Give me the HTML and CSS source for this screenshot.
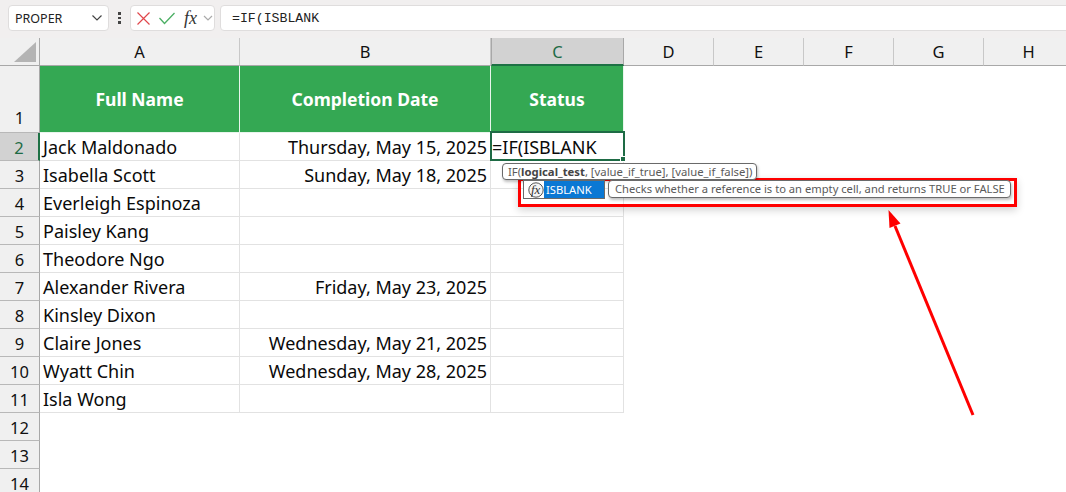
FILE: index.html
```html
<!DOCTYPE html>
<html lang="en">
<head>
<meta charset="utf-8">
<title>Excel ISBLANK</title>
<link rel="stylesheet" href="styles.css">
</head>
<body>
<div class="toolbar">
  <div class="box namebox"><span>PROPER</span>
    <svg class="chev" width="12" height="8" viewBox="0 0 12 8"><path d="M1.5 1.5 6 6l4.500-4.500" fill="none" stroke="#444" stroke-width="1.2"/></svg>
  </div>
  <div class="dots"><i></i><i></i><i></i></div>
  <div class="box fnbox">
    <svg width="13" height="13" viewBox="0 0 13 13"><path d="M.5.500l12 12M12.500.500l-12 12" stroke="#e0474c" stroke-width="1.200" fill="none"/></svg>
    <svg width="16" height="13" viewBox="0 0 16 13"><path d="M.5 6l5 5.500L15.500 1" stroke="#4caf64" stroke-width="1.300" fill="none"/></svg>
    <span class="fx">fx</span>
    <svg width="10" height="7" viewBox="0 0 10 7"><path d="M1 1l4 4 4-4" fill="none" stroke="#aaa" stroke-width="1.200"/></svg>
  </div>
  <div class="box formula">=IF(ISBLANK</div>
</div>
<div class="sheet">
  <div class="ch corner"><svg width="24" height="22" viewBox="0 0 24 22"><path d="M23 1v20H1z" fill="#b4b4b4"/></svg></div>
  <div class="ch">A</div><div class="ch">B</div><div class="ch sel">C</div><div class="ch">D</div><div class="ch">E</div><div class="ch">F</div><div class="ch">G</div><div class="ch">H</div>

  <div class="rh r1">1</div><div class="th">Full Name</div><div class="th">Completion Date</div><div class="th">Status</div><div class="blank span5"></div>

  <div class="rh selrow">2</div><div class="c">Jack Maldonado</div><div class="c num">Thursday, May 15, 2025</div><div class="c editing">=IF(ISBLANK</div><div class="blank span5"></div>
  <div class="rh">3</div><div class="c">Isabella Scott</div><div class="c num">Sunday, May 18, 2025</div><div class="c"></div><div class="blank span5"></div>
  <div class="rh">4</div><div class="c">Everleigh Espinoza</div><div class="c"></div><div class="c"></div><div class="blank span5"></div>
  <div class="rh">5</div><div class="c">Paisley Kang</div><div class="c"></div><div class="c"></div><div class="blank span5"></div>
  <div class="rh">6</div><div class="c">Theodore Ngo</div><div class="c"></div><div class="c"></div><div class="blank span5"></div>
  <div class="rh">7</div><div class="c">Alexander Rivera</div><div class="c num">Friday, May 23, 2025</div><div class="c"></div><div class="blank span5"></div>
  <div class="rh">8</div><div class="c">Kinsley Dixon</div><div class="c"></div><div class="c"></div><div class="blank span5"></div>
  <div class="rh">9</div><div class="c">Claire Jones</div><div class="c num">Wednesday, May 21, 2025</div><div class="c"></div><div class="blank span5"></div>
  <div class="rh">10</div><div class="c">Wyatt Chin</div><div class="c num">Wednesday, May 28, 2025</div><div class="c"></div><div class="blank span5"></div>
  <div class="rh">11</div><div class="c">Isla Wong</div><div class="c"></div><div class="c"></div><div class="blank span5"></div>
  <div class="rh">12</div><div class="blank span8"></div>
  <div class="rh">13</div><div class="blank span8"></div>
  <div class="rh">14</div><div class="blank span8"></div>
</div>

<div class="tip argtip">IF(<b>logical_test</b>, [value_if_true], [value_if_false])</div>
<div class="redbox"></div>
<div class="aclist">
  <svg width="16" height="16" viewBox="0 0 16 16"><circle cx="8" cy="8" r="7.200" fill="#f4f4f4" stroke="#555" stroke-width="1"/></svg>
  <span class="acfx">fx</span>
  <span class="acname">ISBLANK</span>
</div>
<div class="tip desctip">Checks whether a reference is to an empty cell, and returns TRUE or FALSE</div>
<svg class="arrow" width="100" height="210" viewBox="0 0 100 210">
  <path d="M93 207 15 18" stroke="#ff0000" stroke-width="3" fill="none"/>
  <path d="M8.500 2 20.500 15.400 9.500 20z" fill="#ff0000"/>
</svg>
</body>
</html>
```
FILE: styles.css
```css
html, body { margin: 0; padding: 0; }
body {
  width: 1066px;
  height: 492px;
  overflow: hidden;
  position: relative;
  background: #fff;
  font-family: "Noto Sans", sans-serif;
  color: #0a0a0a;
}
.toolbar {
  height: 38px;
  box-sizing: border-box;
  background: #f1efef;
  display: flex;
  align-items: flex-start;
  padding: 5px 0 0 8px;
}
.box {
  height: 26px;
  box-sizing: border-box;
  background: #fff;
  border: 1px solid #dfdddd;
  border-radius: 4px;
  display: flex;
  align-items: center;
}
.namebox {
  width: 101px;
  justify-content: space-between;
  padding: 0 5px 0 6px;
  font-size: 12.500px;
  color: #222;
}
.dots {
  width: 21px;
  height: 26px;
  display: flex;
  flex-direction: column;
  align-items: center;
  justify-content: center;
  gap: 2px;
}
.dots i { width: 2.500px; height: 2.500px; background: #444; display: block; }
.fnbox {
  width: 85px;
  padding-left: 6px;
  gap: 9px;
}
.fx {
  font: italic 18px "Liberation Serif", serif;
  color: #333;
  margin-right: -3px;
}
.formula {
  margin-left: 5px;
  flex: 1;
  margin-right: -4px;
  padding-left: 11px;
  font: 13.200px "Liberation Mono", monospace;
  color: #222;
}
.sheet {
  display: grid;
  grid-template-columns: 40px 200px 251px 133px 90px 90px 90px 90px 90px;
  grid-template-rows: 28px 67px repeat(13, 28px);
  font-size: 18px;
  line-height: 29px;
}
.ch, .rh {
  background: #f0f0f0;
  box-sizing: border-box;
  color: #111;
  display: flex;
  justify-content: center;
  align-items: center;
  font-size: 16.500px;
}
.ch {
  border-right: 1px solid #c8c8c8;
  border-bottom: 1px solid #a8a8a8;
}
.corner {
  justify-content: flex-end;
  border-right: 1px solid #a8a8a8;
  padding-right: 2px;
  align-items: flex-end;
  padding-bottom: 2px;
}
.ch.sel {
  background: #d2d2d2;
  color: #1e6b45;
  border-bottom: 2px solid #1e7145;
  border-right-color: #a8a8a8;
  border-left: 1px solid #a8a8a8;
}
.rh {
  border-right: 1px solid #a8a8a8;
  border-bottom: 1px solid #b8b8b8;
  padding-top: 2px;
}
.rh.r1 { align-items: flex-end; padding-top: 0; }
.rh.selrow {
  background: #d2d2d2;
  color: #1e6b45;
  border-right: 2px solid #1e7145;
}
.th {
  background: #34a853;
  color: #fff;
  font-size: 17.500px;
  font-weight: 700;
  display: flex;
  align-items: center;
  justify-content: center;
  box-sizing: border-box;
  border-right: 1px solid #e8f5ec;
  border-bottom: 1px solid #e8f5ec;
}
.c {
  box-sizing: border-box;
  border-right: 1px solid #e2e2e2;
  border-bottom: 1px solid #e2e2e2;
  padding: 0 3px;
  white-space: nowrap;
  overflow: visible;
}
.c.num { text-align: right; }
.c.editing {
  border: 2px solid #1e6b45;
  margin: -2px -1px 0 -1px;
  padding: 0;
  line-height: 28px;
  background: #fff;
  position: relative;
  z-index: 1;
}
.c.editing::after {
  content: "";
  position: absolute;
  right: -3px;
  bottom: -3px;
  width: 4px;
  height: 4px;
  background: #1e6b45;
  border: 1px solid #fff;
}
.blank { background: #fff; }
.span5 { grid-column: span 5; }
.span8 { grid-column: span 8; }
.tip {
  position: absolute;
  box-sizing: border-box;
  background: #fff;
  border: 1px solid #6a6a6a;
  border-radius: 4px;
  line-height: 15px;
  color: #5a5a5a;
  white-space: nowrap;
  padding: 0 5px;
  box-shadow: 1px 2px 3px rgba(0,0,0,.25);
}
.tip b { color: #444; }
.argtip { left: 502px; top: 163px; width: 255px; height: 17px; z-index: 3; font-size: 11.300px; }
.desctip { left: 608px; top: 180px; width: 403px; height: 18px; padding-left: 6px; z-index: 4; font-size: 11.200px; }
.redbox {
  position: absolute;
  left: 518px;
  top: 178px;
  width: 499px;
  height: 29px;
  box-sizing: border-box;
  border: 3px solid #ff0000;
  box-shadow: 0 3px 8px rgba(0,0,0,.18);
  z-index: 2;
}
.aclist {
  position: absolute;
  left: 523px;
  top: 180px;
  width: 82px;
  height: 19px;
  box-sizing: border-box;
  background: #fff;
  border: 1px solid #6a6a6a;
  z-index: 3;
}
.aclist svg { position: absolute; left: 4px; top: 1px; }
.acfx {
  position: absolute;
  left: 7px;
  top: 0;
  font: italic 13px/17px "Liberation Serif", serif;
  color: #333;
}
.acname {
  position: absolute;
  left: 20px;
  top: 0;
  right: 0;
  bottom: 0;
  background: #0a78d4;
  color: #fff;
  font-size: 11.200px;
  line-height: 17px;
  padding-left: 2px;
}
.arrow {
  position: absolute;
  left: 880px;
  top: 208px;
}
```
